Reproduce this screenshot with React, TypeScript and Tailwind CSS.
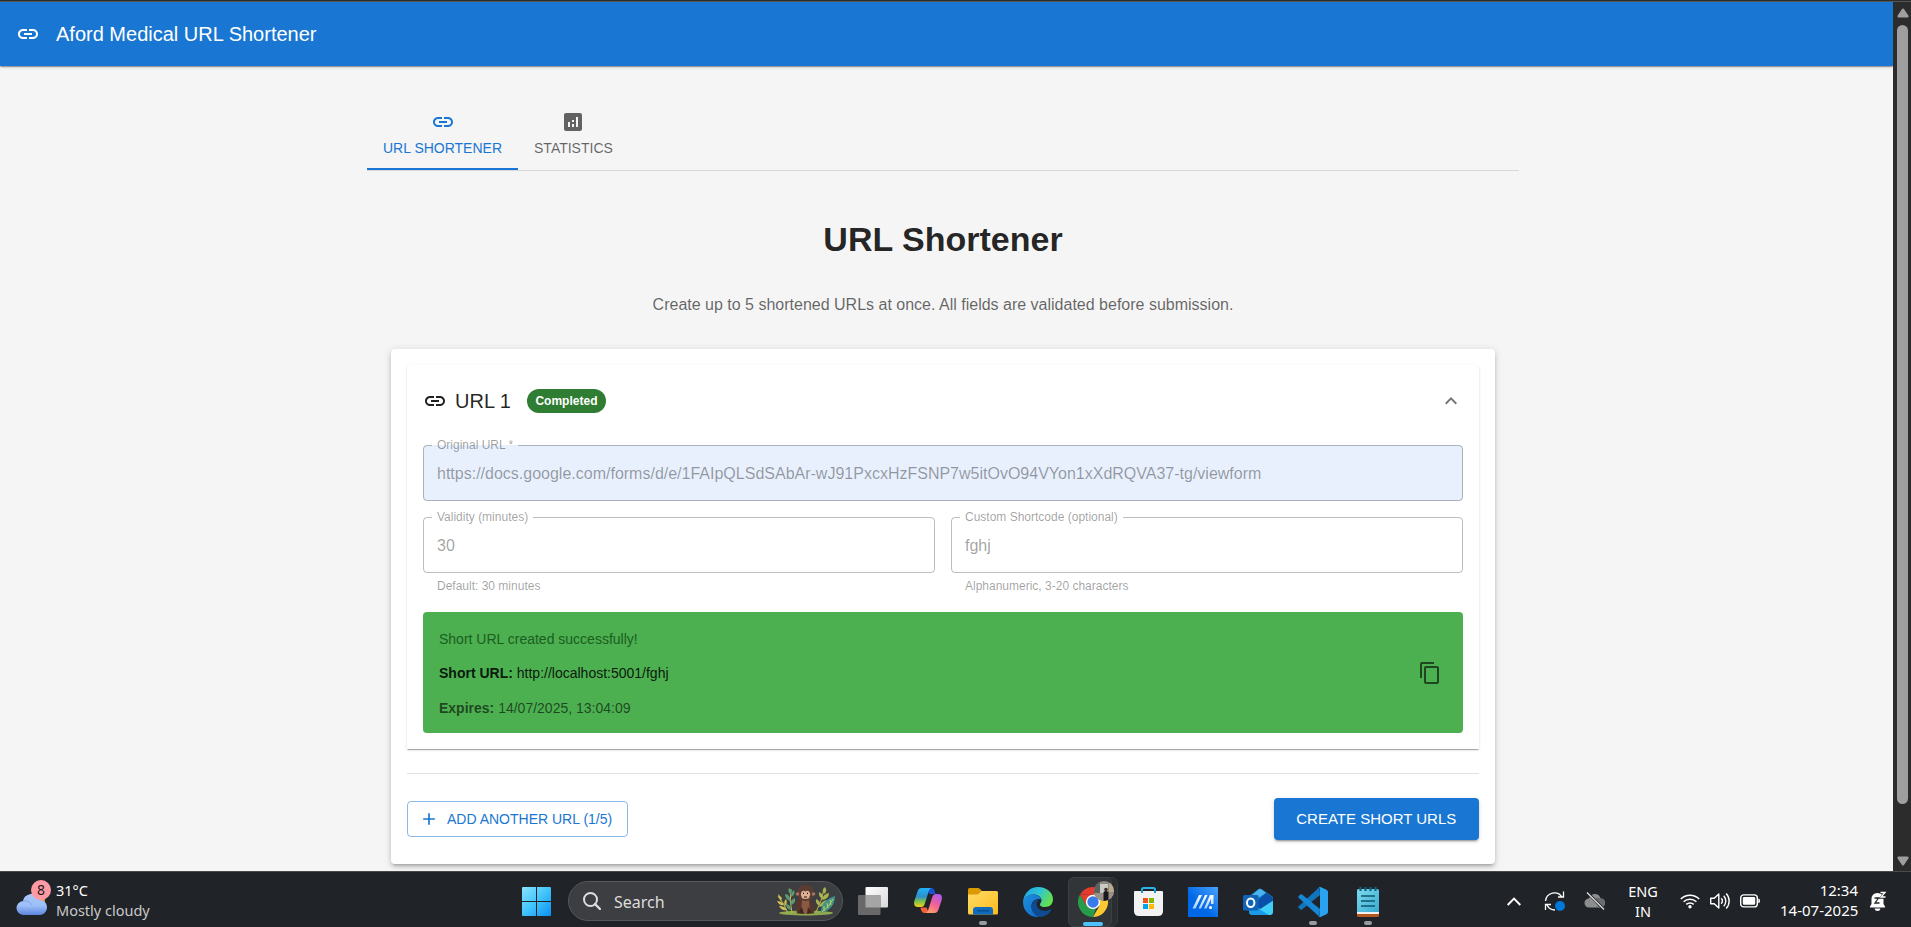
import type { ReactNode } from "react";

const LINK =
  "M3.9 12c0-1.71 1.39-3.1 3.1-3.1h4V7H7c-2.76 0-5 2.24-5 5s2.24 5 5 5h4v-1.9H7c-1.71 0-3.1-1.39-3.1-3.1M8 13h8v-2H8zm9-6h-4v1.9h4c1.71 0 3.1 1.39 3.1 3.1s-1.39 3.1-3.1 3.1h-4V17h4c2.76 0 5-2.24 5-5s-2.24-5-5-5";
const ANALYTICS =
  "M19 3H5c-1.1 0-2 .9-2 2v14c0 1.1.9 2 2 2h14c1.1 0 2-.9 2-2V5c0-1.1-.9-2-2-2M9 17H7v-5h2zm4 0h-2v-3h2zm0-5h-2v-2h2zm4 5h-2V7h2z";
const COPY =
  "M16 1H4c-1.1 0-2 .9-2 2v14h2V3h12zm3 4H8c-1.1 0-2 .9-2 2v14c0 1.1.9 2 2 2h11c1.1 0 2-.9 2-2V7c0-1.1-.9-2-2-2m0 16H8V7h11z";
const EXPAND_LESS = "m12 8-6 6 1.41 1.41L12 10.83l4.59 4.58L18 14z";
const ADD = "M19 13h-6v6h-2v-6H5v-2h6V5h2v6h6z";

function Icon({ d, className = "size-6" }: { d: string; className?: string }) {
  return (
    <svg viewBox="0 0 24 24" fill="currentColor" className={`shrink-0 ${className}`}>
      <path d={d} />
    </svg>
  );
}

function AppBar() {
  return (
    <header className="relative z-10 flex h-16 shrink-0 items-center gap-4 bg-[#1976d2] pl-4 text-white shadow-[0px_2px_1px_-1px_rgba(0,0,0,0.2),0px_1px_1px_0px_rgba(0,0,0,0.14),0px_1px_4px_0px_rgba(0,0,0,0.14)]">
      <Icon d={LINK} />
      <h6 className="text-[20px] leading-8">Aford Medical URL Shortener</h6>
    </header>
  );
}

function Tab({ icon, label, active = false }: { icon: string; label: string; active?: boolean }) {
  return (
    <button
      className={
        active
          ? "flex h-18 flex-col items-center justify-center gap-1.5 border-b-2 border-[#1976d2] px-4 pt-0.5 text-[#1976d2]"
          : "flex h-18 flex-col items-center justify-center gap-1.5 px-4 text-black/60"
      }
    >
      <Icon d={icon} />
      <span className="text-sm leading-[17.5px]">{label}</span>
    </button>
  );
}

function Field({ label, value, helper, filled = false }: { label: string; value: string; helper?: string; filled?: boolean }) {
  return (
    <div className="min-w-0 flex-1 text-black/38">
      <div className={filled ? "relative flex h-14 items-center rounded bg-[#e8f0fe] px-3.5" : "relative flex h-14 items-center rounded px-3.5"}>
        <fieldset className="absolute inset-x-0 -top-[5px] bottom-0 rounded border border-black/26 px-2">
          <legend className="h-[11px] px-[5px] text-xs leading-[11px] whitespace-nowrap">{label}</legend>
        </fieldset>
        <span className="text-base leading-[23px]">{value}</span>
      </div>
      {helper && <p className="mx-3.5 mt-[3px] text-xs leading-5">{helper}</p>}
    </div>
  );
}

function UrlCard() {
  return (
    <section className="mt-8 rounded bg-white px-4 pt-4 pb-6 shadow-[0px_3px_3px_-2px_rgba(0,0,0,0.2),0px_3px_4px_0px_rgba(0,0,0,0.14),0px_1px_8px_0px_rgba(0,0,0,0.12)]">
      <div className="h-96 rounded-t px-4 shadow-[0px_2px_1px_-1px_rgba(0,0,0,0.2),0px_1px_1px_0px_rgba(0,0,0,0.14),0px_1px_3px_0px_rgba(0,0,0,0.12)]">
        <div className="flex h-18 items-center text-black/87">
          <Icon d={LINK} />
          <h6 className="ml-2 text-[20px] leading-8">URL 1</h6>
          <span className="ml-4 flex h-6 items-center rounded-full bg-[#2e7d32] px-[8.5px] text-xs font-bold text-white">Completed</span>
          <span className="ml-auto flex text-black/54">
            <Icon d={EXPAND_LESS} />
          </span>
        </div>
        <div className="flex flex-col gap-4 pt-2">
          <Field filled label="Original URL *" value="https://docs.google.com/forms/d/e/1FAIpQLSdSAbAr-wJ91PxcxHzFSNP7w5itOvO94VYon1xXdRQVA37-tg/viewform" />
          <div className="flex gap-4">
            <Field label="Validity (minutes)" value="30" helper="Default: 30 minutes" />
            <Field label="Custom Shortcode (optional)" value="fghj" helper="Alphanumeric, 3-20 characters" />
          </div>
          <div className="flex h-[121px] items-center justify-between rounded bg-[#4caf50] pr-[21px] pl-4 text-sm leading-5">
            <div className="flex flex-col gap-3.5 pt-px">
              <p className="text-[#1b5e20]">Short URL created successfully!</p>
              <p className="text-black/87">
                <strong>Short URL:</strong> http://localhost:5001/fghj
              </p>
              <p className="mt-px text-black/60">
                <strong>Expires:</strong> 14/07/2025, 13:04:09
              </p>
            </div>
            <span className="text-black/60">
              <Icon d={COPY} />
            </span>
          </div>
        </div>
      </div>
      <div className="mt-6 flex items-center justify-between border-t border-black/12 pt-6">
        <button className="flex h-9 items-center rounded border border-[#1976d2]/50 pr-[15px] pl-[11px] text-[#1976d2]">
          <Icon d={ADD} className="size-5" />
          <span className="ml-2 text-sm">ADD ANOTHER URL (1/5)</span>
        </button>
        <button className="h-[42px] rounded bg-[#1976d2] px-[22.7px] text-[15px] text-white shadow-[0px_3px_1px_-2px_rgba(0,0,0,0.2),0px_2px_2px_0px_rgba(0,0,0,0.14),0px_1px_5px_0px_rgba(0,0,0,0.12)]">
          CREATE SHORT URLS
        </button>
      </div>
    </section>
  );
}

function Scrollbar() {
  return (
    <div className="flex w-[18px] shrink-0 flex-col items-center bg-[#2c2c2c] pt-1.5 pb-[5px]">
      <svg viewBox="0 0 12 10" className="ml-px h-2.5 w-3" fill="#9f9f9f">
        <path d="M6 .5q.6 0 1 .6l4.5 6.7Q12 9.300 10.500 9.500h-9Q0 9.300.5 7.800L5 1.100Q5.400.5 6 .5" />
      </svg>
      <div className="mt-[7px] h-[779px] w-[11px] rounded-full bg-[#9f9f9f]" />
      <svg viewBox="0 0 12 10" className="mt-auto ml-px h-2.5 w-3 rotate-180" fill="#9f9f9f">
        <path d="M6 .5q.6 0 1 .6l4.5 6.7Q12 9.300 10.500 9.500h-9Q0 9.300.5 7.800L5 1.100Q5.400.5 6 .5" />
      </svg>
    </div>
  );
}

function TaskItem({ children, running = false }: { children: ReactNode; running?: boolean }) {
  return (
    <div className="relative flex h-full w-[55px] shrink-0 items-center justify-center pt-1">
      {children}
      {running && <span className="absolute bottom-0.5 left-[23px] h-1 w-2 rounded-full bg-[#9a9b9d]" />}
    </div>
  );
}

function WeatherIcon() {
  return (
    <svg viewBox="0 0 36 40" className="h-10 w-9">
      <defs>
        <linearGradient id="cloud" x1="0" y1="0" x2="0" y2="1">
          <stop offset="0" stopColor="#a9c8fa" />
          <stop offset=".55" stopColor="#9dbff8" />
          <stop offset="1" stopColor="#5b86e0" />
        </linearGradient>
      </defs>
      <circle cx="22" cy="20" r="8" fill="#f59a2d" />
      <path d="M9 35a7 7 0 0 1-1-14c1-5 5-7 9-7s7 3 8 6c4 0 7 3 7 7.500S28 35 25 35z" fill="url(#cloud)" />
      <path d="M8 21q6-1 9 4" stroke="#7fa5ec" strokeWidth="1" fill="none" />
      <circle cx="26" cy="10" r="10" fill="#ff99a4" />
      <text x="26" y="15" textAnchor="middle" fontSize="14" fill="#1b1b1b" className="font-['Noto_Sans',sans-serif]">
        8
      </text>
    </svg>
  );
}

function WindowsIcon() {
  return (
    <svg viewBox="0 0 29 29" className="size-[29px]">
      <defs>
        <linearGradient id="win" x1="0" y1="0" x2="29" y2="29" gradientUnits="userSpaceOnUse">
          <stop offset="0" stopColor="#8be3ff" />
          <stop offset=".5" stopColor="#41c4fb" />
          <stop offset="1" stopColor="#0a90f5" />
        </linearGradient>
      </defs>
      <path fill="url(#win)" d="M1 0h13v14H0V1q0-1 1-1M15 0h13q1 0 1 1v13H15zM0 15h14v14H1q-1 0-1-1zM15 15h14v13q0 1-1 1H15z" />
    </svg>
  );
}

function MonkeyArt() {
  return (
    <svg viewBox="0 0 60 32" className="h-8 w-[60px]">
      <ellipse cx="30" cy="28" rx="27" ry="2.500" fill="#8faa4e" />
      <g fill="none" stroke="#c8b64a" strokeWidth="1">
        <path d="M12 28Q8 18 2 11M16 28Q13 16 15 4M46 27Q54 22 58 13M40 27Q46 16 48 4" />
      </g>
      <g fill="#c9bd55">
        <path d="M2 9l4 4-1 3q-3-3-3-7M1 16q5 0 7 4-5 1-7-4M3 21q6 0 8 4-6 1-8-4M10 14q2 4-1 7-2-4 1-7" />
      </g>
      <g fill="#5d9b74">
        <path d="M13 3q4 2 2 6-4-2-2-6M18 5q2 5-3 7 0-5 3-7M9 9q6 1 5 7-5-2-5-7M19 13q1 6-5 7 0-5 5-7M10 19q5 1 5 6-5-1-5-6" />
      </g>
      <g fill="#a8b44f">
        <path d="M49 2q3 4-1 7-3-4 1-7M43 7q5 2 4 7-5-2-4-7M53 8q0 6-7 7 1-6 7-7M40 14q5 2 4 7-5-2-4-7M51 15q-1 6-8 7 2-6 8-7" />
      </g>
      <path d="M59 11q0 13-14 17-1-12 14-17" fill="#3f9488" />
      <path d="M57 14Q53 22 46 27M51 18l1 5M54 15l1 5M48 21v5" stroke="#c2cf62" strokeWidth="1" fill="none" />
      <path d="M21 28.500Q18 18 23 13q6-4 11 0 6 6 4 15.500z" fill="#59362c" />
      <path d="M26 15q4-2 7 0l1 13h-9z" fill="#8a5a45" />
      <path d="M21 8q0-8 8.500-8T38 8q-1 8-8.500 8T21 8" fill="#5b3c33" />
      <circle cx="21.500" cy="9" r="1.800" fill="#a8735a" />
      <circle cx="37.500" cy="9" r="1.800" fill="#a8735a" />
      <path d="M25 8q1.500-3.500 4.500-1.500Q32.500 4.500 34 8q.5 2-.5 3.500 0 2.500-4 2.500t-4-2.500Q24.500 10 25 8" fill="#dcb195" />
      <path d="M27 8.300h1M31 8.300h1M28 12h3" stroke="#25140f" strokeWidth="1.200" />
      <path d="M22 28l4-6 2 7M36 28l-4-6-1 7" fill="#3f2620" />
    </svg>
  );
}

function TaskViewIcon() {
  return (
    <svg viewBox="0 0 30 29" className="h-[29px] w-[30px]">
      <defs>
        <linearGradient id="tv" x1="0" y1="0" x2="1" y2="1">
          <stop offset="0" stopColor="#fff" />
          <stop offset="1" stopColor="#d8d8d8" />
        </linearGradient>
      </defs>
      <rect x="7.500" width="22.500" height="20.500" rx="1" fill="url(#tv)" />
      <rect y="8" width="22.500" height="20" rx="1" fill="#686868" />
      <rect x="7.500" y="8" width="15" height="12.500" fill="#a5a5a5" />
    </svg>
  );
}

function CopilotIcon() {
  return (
    <svg viewBox="0 0 28 26" className="mb-px h-[26px] w-7">
      <defs>
        <linearGradient id="cpa" x1="0" y1="0" x2="0" y2="1">
          <stop offset="0" stopColor="#1fb4f2" />
          <stop offset=".45" stopColor="#2b8fd0" />
          <stop offset=".7" stopColor="#7cc04b" />
          <stop offset="1" stopColor="#f3d11c" />
        </linearGradient>
        <linearGradient id="cpb" x1=".8" y1="0" x2=".2" y2="1">
          <stop offset="0" stopColor="#b05cf0" />
          <stop offset=".5" stopColor="#f0609a" />
          <stop offset="1" stopColor="#ffa35f" />
        </linearGradient>
      </defs>
      <path d="M13 0h4c3 0 3.500 2 4.500 6h-6z" fill="#1a4fd6" />
      <path d="M7.500 0H18c-2 0-3 2-3.500 4L11 15c-.8 3-2 4-4 4H4c-4 0-4.500-3-3.500-6.500L3.500 3.500C4.300 1 5.500 0 7.500 0" fill="url(#cpa)" />
      <path d="M15 25h-4c-3 0-4-2-4.500-5.500h6z" fill="#f0603c" />
      <path d="M20.500 25H11c2 0 3-2 3.500-4L18 10c.8-3 2-4 4-4h2c4 0 4.500 3 3.500 6.500l-3 9c-.8 2.500-2 3.500-4 3.500" fill="url(#cpb)" />
    </svg>
  );
}

function ExplorerIcon() {
  return (
    <svg viewBox="0 0 30 27" className="h-[27px] w-[30px]">
      <defs>
        <linearGradient id="fold" x1="0" y1="0" x2="1" y2="1">
          <stop offset="0" stopColor="#ffdc69" />
          <stop offset="1" stopColor="#fdbb1b" />
        </linearGradient>
      </defs>
      <path d="M0 1.500Q0 0 1.500 0H10q1 0 2 1l3 3v5H0z" fill="#dc9a00" />
      <path d="M0 6.500h9q1 0 2-1l2-2q.5-.5 1.500-.5h14Q30 3 30 4.500v21q0 1-1.500 1h-27Q0 26.500 0 25z" fill="url(#fold)" />
      <path d="M5 26.500V22q0-3 3-3h14q3 0 3 3v4.500z" fill="#0f6cbd" />
      <rect x="9" y="22" width="12" height="1.500" fill="#0a4f91" />
    </svg>
  );
}

function EdgeIcon() {
  return (
    <svg viewBox="0 0 30 30" className="size-[30px]">
      <defs>
        <linearGradient id="eda" x1="0" y1="0" x2="1" y2=".4">
          <stop offset="0" stopColor="#1ba0e8" />
          <stop offset=".55" stopColor="#2fc3d8" />
          <stop offset="1" stopColor="#62df52" />
        </linearGradient>
        <linearGradient id="edb" x1="0" y1="0" x2="1" y2="1">
          <stop offset="0" stopColor="#1d8fdf" />
          <stop offset="1" stopColor="#1167c4" />
        </linearGradient>
      </defs>
      <path d="M0 15C1 6 7 0 15 0c9 0 15 6 15 12 0 5-3 8-8 8-4 0-5.500-1.500-5-3 .5-1 1.500-2 1.500-4 0-3-4-6-9-5.500C5 8 1.500 10.500 0 15" fill="url(#eda)" />
      <path d="M0 15c1-5 5-7.500 10-7.500 4.500 0 8.500 2.700 8.500 5.500C17 11 8 12 8.500 20c.3 5 4 9 8.500 10C7 31 0 24 0 15" fill="url(#edb)" />
      <path d="M17 12q-8 1-8.500 8c.3 5 4 9 8.500 10 5-.5 9-3 11-6.500.5-1-.3-1.500-1-1-5 3-13 1-13.500-5 0-2 1-4 3.500-5.500" fill="#0d4c92" />
    </svg>
  );
}

function ChromeIcon() {
  return (
    <svg viewBox="0 0 37 37" className="absolute top-[3px] left-[9px] size-[37px]">
      <g transform="translate(0 6)">
        <path d="M2 7.500A15 15 0 0 1 28 7.500H15z" fill="#e33b2e" />
        <path d="M28 7.500A15 15 0 0 1 15 30l6.500-11.200L15 7.500z" fill="#fdc82f" />
        <path d="M15 30A15 15 0 0 1 2 7.500l6.500 11.200L15 22l3-.5z" fill="#269b4a" />
        <path d="M2 7.500l6.500 11.200V12L15 7.500z" fill="#e33b2e" />
        <circle cx="15" cy="15" r="7.200" fill="#fff" />
        <circle cx="15" cy="15" r="5.700" fill="#3a7bea" />
      </g>
      <clipPath id="avatar">
        <circle cx="26" cy="10" r="10" />
      </clipPath>
      <g clipPath="url(#avatar)">
        <rect x="16" width="20" height="20" fill="#8d8a82" />
        <path d="M16 0h6v20h-6z" fill="#5c615f" />
        <path d="M22 3h8v10h-8z" fill="#c8cbc5" />
        <path d="M31 2h5v9h-5z" fill="#bba98e" />
        <path d="M16 12h20v8H16z" fill="#9b9186" />
        <circle cx="28" cy="8.500" r="1.800" fill="#40302c" />
        <path d="M25.500 11q2.500-2 5 0v9h-5z" fill="#17191d" />
      </g>
    </svg>
  );
}

function StoreIcon() {
  return (
    <svg viewBox="0 0 29 29" className="size-[29px]">
      <path d="M8 6V2.500Q8 1 9.500 1h10Q21 1 21 2.500V6" fill="none" stroke="#27b5ea" strokeWidth="2" />
      <path d="M0 5q0-1 1-1h27q1 0 1 1v19q0 5-5 5H5q-5 0-5-5z" fill="#f2f2f2" />
      <path d="M8 3v3M21 3v3" stroke="#1595cf" strokeWidth="2" />
      <path d="M9 11h5v5H9z" fill="#f25022" />
      <path d="M15 11h5v5h-5z" fill="#7fba00" />
      <path d="M9 17h5v5H9z" fill="#00a4ef" />
      <path d="M15 17h5v5h-5z" fill="#ffb900" />
    </svg>
  );
}

function AsusIcon() {
  return (
    <svg viewBox="0 0 30 30" className="size-[30px]">
      <defs>
        <linearGradient id="asus" x1="0" y1="1" x2="1" y2="0">
          <stop offset=".4" stopColor="#0068e6" />
          <stop offset="1" stopColor="#4aa2ff" />
        </linearGradient>
        <linearGradient id="asusm" x1="0" y1="0" x2="0" y2="1">
          <stop offset="0" stopColor="#fff" />
          <stop offset="1" stopColor="#a5cdfb" />
        </linearGradient>
      </defs>
      <rect width="30" height="30" fill="url(#asus)" />
      <path d="M4.500 21.500 11 8h3L7.500 21.500zM10.500 21.500 17 8h2.500L13 21.500zM16 21.500 22 8h3.500v9H23v-5l-4.500 9.500z" fill="url(#asusm)" />
      <circle cx="22.500" cy="20.500" r="1.500" fill="#fff" />
    </svg>
  );
}

function OutlookIcon() {
  return (
    <svg viewBox="0 0 30 28" className="h-7 w-[30px]">
      <path d="M5 9 15.500 1q1.500-1 3 0L30 9v5L18 20 5 14z" fill="#1478c8" />
      <path d="M8 8 15.500 1.500q1.500-1 3 0L23 5 10 13z" fill="#4bb4ee" />
      <path d="M23 5l6 4q1 1 1 3L16 22l-4-7z" fill="#0b4fa8" />
      <path d="M6 15l11 6 13-8v11q0 3-3 3H10q-4 0-4-4z" fill="#3fd0fa" />
      <path d="M6 15l20 12H10q-4 0-4-4z" fill="#1a9be8" />
      <rect y="7" width="15.500" height="15.500" rx="1.500" fill="#0f64b8" />
      <ellipse cx="7.700" cy="14.700" rx="3.700" ry="4.300" fill="none" stroke="#fff" strokeWidth="2" />
    </svg>
  );
}

function CodeIcon() {
  return (
    <svg viewBox="0 0 30 30" className="size-[30px]">
      <path d="M21.500 0 22 8 4 22.500q-.8.6-1.600 0L.6 20.800q-.8-.8 0-1.600L21 .5z" fill="#0f75bd" />
      <path d="M21.500 30 22 22 4 7.500q-.8-.6-1.600 0L.6 9.200q-.8.800 0 1.600L21 29.500z" fill="#1687d4" />
      <path d="M21.500 0q.6-.2 1 0l6 2.800Q30 3.500 30 5v20q0 1.500-1.500 2.200l-6 2.800q-1 .2-2-.6Q22 30 22 28V2q0-2-1.500-1.400z" fill="#2ba2f0" />
    </svg>
  );
}

function NotepadIcon() {
  return (
    <svg viewBox="0 0 22 30" className="h-[30px] w-[22px]">
      <defs>
        <linearGradient id="note" x1="0" y1="0" x2="1" y2="1">
          <stop offset="0" stopColor="#7ddcf0" />
          <stop offset="1" stopColor="#39a9cf" />
        </linearGradient>
      </defs>
      <path d="M0 24h22v4.500q0 1.500-1.500 1.500h-19Q0 30 0 28.500z" fill="#b4581f" />
      <path d="M0 23h22v4H0z" fill="#f1f1f1" />
      <path d="M0 3.500Q0 2 1.500 2h19Q22 2 22 3.500V25H0z" fill="url(#note)" />
      <path d="M4 9h14M4 14h14M4 19h14" stroke="#0d5670" strokeWidth="1.700" />
      <path d="M3.500 0v4M8.500 0v4M13.500 0v4M18.500 0v4" stroke="#12607b" strokeWidth="2.200" />
    </svg>
  );
}

function TrayIcons() {
  return (
    <div className="flex h-full items-center pt-[3px] text-white">
      <svg viewBox="0 0 14 9" className="h-[9px] w-3.5" fill="none" stroke="currentColor" strokeWidth="1.900">
        <path d="M.7 8 7 1.600 13.300 8" />
      </svg>
      <svg viewBox="0 0 22 22" className="ml-[23px] size-[22px]" fill="none" stroke="currentColor" strokeWidth="1.300">
        <path d="M1.500 11a9 9 0 0 1 16.500-4M19.500 1.500v5.500h-5.500M11 20a9 9 0 0 1-8-5M1.500 20v-5.500H7" />
        <circle cx="16" cy="16" r="5" fill="#0078d7" stroke="none" />
      </svg>
      <svg viewBox="0 0 22 18" className="ml-[18px] h-[18px] w-[22px]">
        <path d="M5 15.500A4.500 4.500 0 0 1 5 6.500C6 3 9 1.500 11.500 2c3 .3 4.500 2 5 4.500 3 0 4.500 2 4.500 4.500s-2 4.500-4.500 4.500z" fill="#8c8d8f" />
        <path d="M11 7q2.500-2 5.500-.5c3 0 4.500 2 4.500 4.500s-2 4.500-4.500 4.500H14z" fill="#6c6d70" />
        <path d="M3.500.5 19.500 17" stroke="#202327" strokeWidth="2.600" />
        <path d="M3 .5 20 17.500" stroke="#e4e4e4" strokeWidth="1.200" />
      </svg>
    </div>
  );
}

function StatusIcons() {
  return (
    <div className="flex h-full items-center pt-[3px] text-white">
      <svg viewBox="0 0 20 16" className="h-4 w-5" fill="none" stroke="currentColor" strokeWidth="1.500">
        <path d="M.8 6A13 13 0 0 1 19.200 6M3.600 8.800a9 9 0 0 1 12.800 0M6.300 11.400a5.300 5.300 0 0 1 7.400 0" />
        <circle cx="10" cy="13.800" r="1.700" fill="currentColor" stroke="none" />
      </svg>
      <svg viewBox="0 0 20 18" className="ml-2.5 h-[18px] w-5" fill="none" stroke="currentColor" strokeWidth="1.400">
        <path d="M.7 6.300h3.500L8.800 2v14l-4.600-4.300H.7z" strokeLinejoin="round" />
        <path d="M11.200 6.300a4 4 0 0 1 0 5.400M13.700 3.800a7.500 7.500 0 0 1 0 10.400M16.200 1.500a11 11 0 0 1 0 15" />
      </svg>
      <svg viewBox="0 0 20 14" className="ml-2.5 h-3.5 w-5">
        <rect x=".7" y=".9" width="16.600" height="12" rx="3" fill="none" stroke="currentColor" strokeWidth="1.400" />
        <rect x="2.800" y="3" width="12.400" height="7.800" rx="1.200" fill="currentColor" />
        <path d="M18.300 4.500q1.700 0 1.700 2.400t-1.700 2.400z" fill="currentColor" />
      </svg>
    </div>
  );
}

function BellIcon() {
  return (
    <svg viewBox="0 0 18 21" className="h-[21px] w-[18px]">
      <path d="M1 15.500 2.500 13V8.500Q2.500 2 8.500 2q6 0 6 6.500V13l1.500 2.500v1H1zM5.500 17.500h6q-.5 2.500-3 2.500t-3-2.500" fill="#fff" />
      <path d="M5.500 7h4L6 12h4.500" fill="none" stroke="#202327" strokeWidth="1.300" />
      <path d="M10.500 1H17l-5 5.500h5" fill="none" stroke="#202327" strokeWidth="2.400" />
      <path d="M11.500 1.500h4.500l-4 4.500h4.500" fill="none" stroke="#fff" strokeWidth="1.300" />
    </svg>
  );
}

function Taskbar() {
  return (
    <footer className="flex h-14 shrink-0 items-center border-t border-[#474a49] bg-[#202327] font-['Noto_Sans',sans-serif] text-[15px] leading-5 text-white">
      <div className="flex w-[509px] items-center pl-[15px]">
        <WeatherIcon />
        <div className="ml-[5px] pt-px text-[14.500px]">
          <p>31°C</p>
          <p className="text-[#c8c9ca]">Mostly cloudy</p>
        </div>
      </div>
      <TaskItem>
        <WindowsIcon />
      </TaskItem>
      <div className="mt-[3px] ml-1 flex h-10 w-[275px] items-center rounded-full border border-[#55585a] bg-[#3c3e41] pr-1.5 pl-3.5">
        <svg viewBox="0 0 18 18" className="size-[18px]" fill="none" stroke="#dcdddd">
          <circle cx="7.500" cy="7.500" r="6.500" strokeWidth="2" />
          <path d="m12 12 5 5" strokeWidth="2.400" strokeLinecap="round" />
        </svg>
        <span className="ml-[13px] pt-px text-base text-[#dcdddd]">Search</span>
        <span className="ml-auto">
          <MonkeyArt />
        </span>
      </div>
      <div className="ml-[2.5px] flex h-full">
        <TaskItem>
          <TaskViewIcon />
        </TaskItem>
        <TaskItem>
          <CopilotIcon />
        </TaskItem>
        <TaskItem running>
          <ExplorerIcon />
        </TaskItem>
        <TaskItem>
          <EdgeIcon />
        </TaskItem>
        <TaskItem>
          <div className="relative h-[50px] w-[50px] rounded-md border border-[#35383b] bg-[#2a2d30]">
            <div className="absolute -top-px -left-px h-[50px] w-11 rounded-md border border-[#3d4043] bg-[#323538]" />
            <ChromeIcon />
            <span className="absolute bottom-0 left-3.5 h-1 w-5 rounded-full bg-[#4cc2ff]" />
          </div>
        </TaskItem>
        <TaskItem>
          <StoreIcon />
        </TaskItem>
        <TaskItem>
          <AsusIcon />
        </TaskItem>
        <TaskItem>
          <OutlookIcon />
        </TaskItem>
        <TaskItem running>
          <CodeIcon />
        </TaskItem>
        <TaskItem running>
          <NotepadIcon />
        </TaskItem>
      </div>
      <div className="ml-auto flex h-full items-center pr-6">
        <TrayIcons />
        <div className="ml-[21px] w-8 pt-0.5 text-center text-[14.500px]">
          <p>ENG</p>
          <p>IN</p>
        </div>
        <div className="ml-[21px] h-full">
          <StatusIcons />
        </div>
        <div className="ml-5 w-[78px] pt-px text-right whitespace-nowrap">
          <p>12:34</p>
          <p>14-07-2025</p>
        </div>
        <div className="ml-[11px] pt-1">
          <BellIcon />
        </div>
      </div>
    </footer>
  );
}

export default function App() {
  return (
    <div className="flex h-[927px] w-[1911px] flex-col overflow-hidden bg-[#f5f5f5] font-['Liberation_Sans',Arial,sans-serif] text-black/87">
      <div className="h-0.5 shrink-0 border-b border-[#555] bg-[#2c2c2c]" />
      <div className="flex h-[869px] shrink-0">
        <div className="flex min-w-0 flex-1 flex-col overflow-hidden">
          <AppBar />
          <main className="ml-[343px] w-[1200px] px-6 pt-8">
            <nav className="flex border-b border-black/12">
              <Tab active icon={LINK} label="URL SHORTENER" />
              <Tab icon={ANALYTICS} label="STATISTICS" />
            </nav>
            <div className="px-6 pt-[47px]">
              <h1 className="text-center text-[34px] leading-[42px] font-bold">URL Shortener</h1>
              <p className="mt-[33px] text-center text-base text-black/60">
                Create up to 5 shortened URLs at once. All fields are validated before submission.
              </p>
              <UrlCard />
            </div>
          </main>
        </div>
        <Scrollbar />
      </div>
      <Taskbar />
    </div>
  );
}
